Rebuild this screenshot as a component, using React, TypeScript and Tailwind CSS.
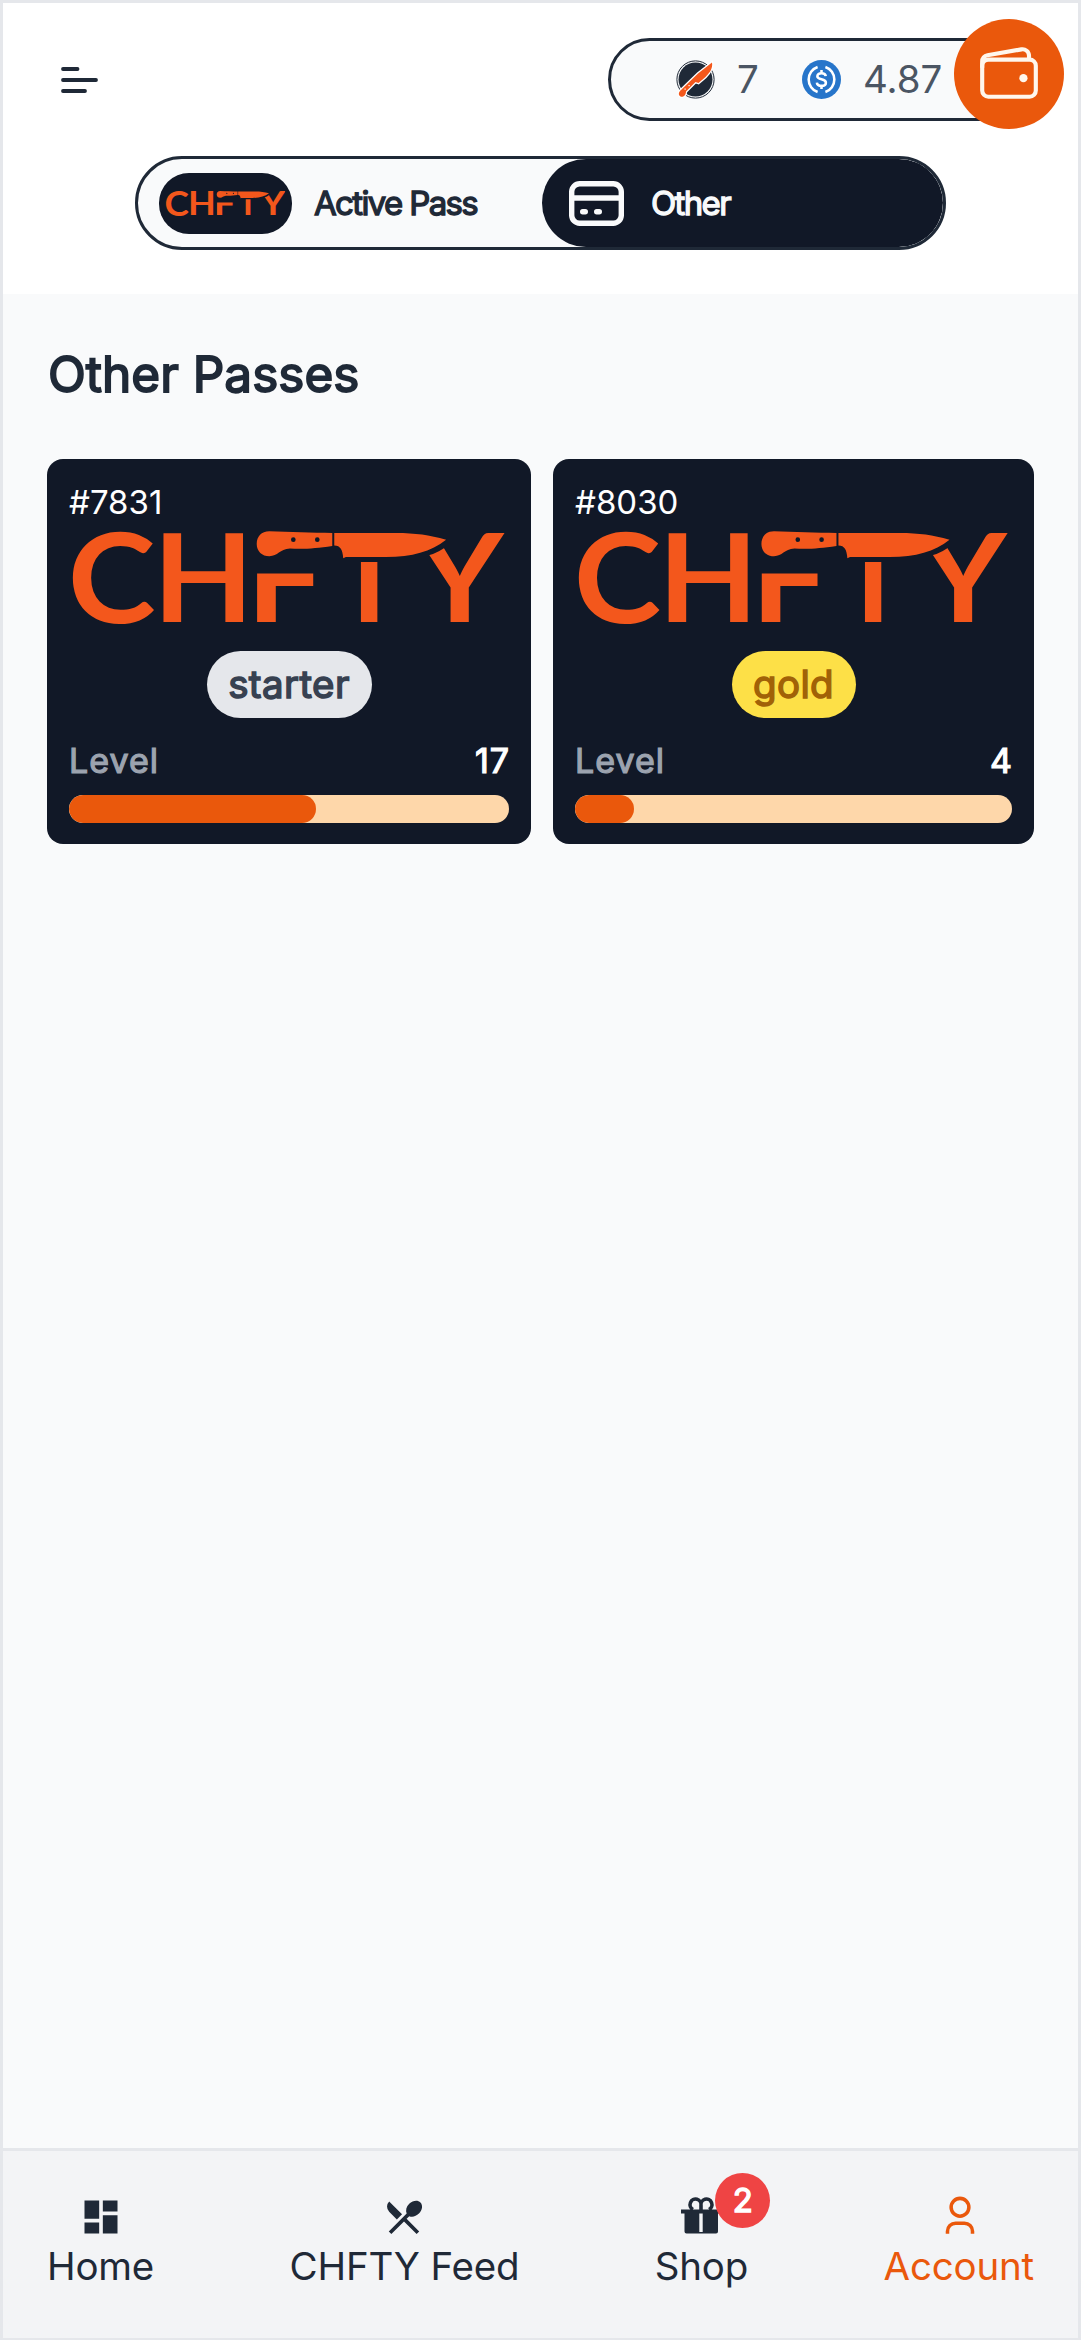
import React from "react";
import { MdDashboard, MdRestaurantMenu } from "react-icons/md";
import { IoWalletOutline } from "react-icons/io5";

const INTER = "font-['Inter',sans-serif]";

function ChftyLogo({ id, className }: { id: string; className?: string }) {
  return (
    <svg viewBox="0 0 1295 280" preserveAspectRatio="none" className={`overflow-visible ${className ?? ""}`} fill="#f3571c" aria-label="CHFTY">
      <defs>
        <clipPath id={`${id}-f`}>
          <rect x="550" y="128" width="260" height="150" />
        </clipPath>
        <clipPath id={`${id}-t`}>
          <rect x="700" y="93" width="400" height="190" />
        </clipPath>
        <clipPath id={`${id}-y`}>
          <path d="M1066 74 Q1100 66 1130 40 L1160 0 H1300 V280 H1066Z" />
        </clipPath>
      </defs>
      <g fontFamily="Lato" fontWeight="700" fontSize="370">
        <text transform="translate(-16 276) scale(1 1.015)" textLength="264" lengthAdjust="spacingAndGlyphs">C</text>
        <text transform="translate(240 274)" textLength="302" lengthAdjust="spacingAndGlyphs">H</text>
        <g clipPath={`url(#${id}-f)`}>
          <text transform="translate(520 274)" textLength="235" lengthAdjust="spacingAndGlyphs">F</text>
        </g>
        <g clipPath={`url(#${id}-t)`}>
          <text transform="translate(780 274)" textLength="220" lengthAdjust="spacingAndGlyphs">T</text>
        </g>
        <g clipPath={`url(#${id}-y)`}>
          <text transform="translate(1030 274)" textLength="264" lengthAdjust="spacingAndGlyphs">Y</text>
        </g>
      </g>
      <path
        fillRule="evenodd"
        d="M590 1C566 1 552 17 552 39C552 61 568 76 590 76C616 76 620 55 652 53C700 55 730 52 779 45V6C720 6 650 3 590 1ZM662 19a7 7 0 1 1 0 14a7 7 0 1 1 0-14ZM734 19a7 7 0 1 1 0 14a7 7 0 1 1 0-14Z"
      />
      <path d="M785 6H970C1030 6 1070 12 1121 26C1075 62 1020 78 940 78H820L812 82C810 58 804 44 785 44Z" />
    </svg>
  );
}

function MenuIcon() {
  return (
    <svg viewBox="0 0 37 26" className="h-[26px] w-[37px]" stroke="#1f2937" strokeWidth="3.8" strokeLinecap="round">
      <path d="M2 2H16.500M2 13H35M2 24H24" />
    </svg>
  );
}

function KnifeCoin() {
  return (
    <svg viewBox="0 0 39 39" className="h-[39px] w-[39px] overflow-visible">
      <circle cx="19.5" cy="19.5" r="18.6" fill="none" stroke="#1f2937" strokeWidth="1" />
      <circle cx="19.5" cy="19.5" r="17" fill="#1f2937" />
      <path
        d="M36 2.500C37 8 34 12.500 29.500 17L22.500 23L19.500 22L10 31.500C10 36 6.500 37.500 4.500 36.500C2 35 2.500 32 5 30L22 13.500Z"
        fill="#f4581c"
        stroke="#ffffff"
        strokeWidth="2.600"
        paintOrder="stroke"
      />
      <path d="M8.500 28.500h1.200v1.200h-1.200ZM12.500 25h1.200v1.200h-1.200Z" fill="#fff" />
    </svg>
  );
}

function UsdcCoin() {
  return (
    <svg viewBox="0 0 32 32" className="h-[39px] w-[39px]">
      <circle cx="16" cy="16" r="16" fill="#2775ca" />
      <g fill="none" stroke="#fff" strokeWidth="2.100">
        <path d="M12.800 5.700A10.900 10.900 0 0 0 12.800 26.300M19.200 5.700A10.900 10.900 0 0 1 19.200 26.300" />
        <path d="M19.500 13.300C19.300 11.700 18 10.900 16 10.900C14 10.900 12.600 11.900 12.600 13.400C12.600 16.900 19.600 14.800 19.600 18.600C19.600 20.200 18.200 21.200 16 21.200C13.800 21.200 12.400 20.300 12.200 18.500M16 8.300V11M16 21V23.700" />
      </g>
    </svg>
  );
}

function CardIcon() {
  return (
    <svg viewBox="0 0 55 45" className="h-[45px] w-[55px]" fill="none" stroke="#f9fafb" strokeWidth="5.400">
      <rect x="2.700" y="2.700" width="49.600" height="39.600" rx="8" />
      <path d="M3 17H52" />
      <path d="M13.700 30.700H16.300M27.700 30.700H30.300" strokeLinecap="round" />
    </svg>
  );
}

function GiftIcon() {
  return (
    <svg viewBox="0 0 44 44" className="h-11 w-11 overflow-visible" fill="#1f2937">
      <path d="M2 14.500H42V18.500H39V36.500Q39 38.500 37 38.500H7.500Q5.500 38.500 5.500 36.500V18.500H2Z" />
      <path d="M20.300 18.500H23.700V37H20.300Z" fill="#f3f4f6" />
      <g fill="none" stroke="#1f2937" strokeWidth="3.600">
        <path d="M22 15V10.500A5.500 5.500 0 1 0 14 14.500M22 15V10.500A5.500 5.500 0 1 1 30 14.500" />
      </g>
    </svg>
  );
}

function AccountIcon() {
  return (
    <svg viewBox="0 0 44 44" className="ml-[2px] h-11 w-11" fill="none" stroke="#ea580c" strokeWidth="3.700">
      <circle cx="22" cy="11.800" r="9.300" />
      <path d="M8.900 39.500V37A8.500 8.500 0 0 1 17.400 28.500H26.600A8.500 8.500 0 0 1 35.100 37V39.500" />
    </svg>
  );
}

type Pass = {
  id: string;
  tier: string;
  level: number;
  progress: number;
  width: string;
  pill: string;
};

const passes: Pass[] = [
  { id: "7831", tier: "starter", level: 17, progress: 56.2, width: "w-[484px]", pill: "w-[165px] bg-gray-200 text-[#374151]" },
  { id: "8030", tier: "gold", level: 4, progress: 13.4, width: "w-[481px]", pill: "w-[124px] bg-[#fde047] text-[#a16207]" },
];

function PassCard({ pass }: { pass: Pass }) {
  return (
    <article className={`${pass.width} flex h-[385px] flex-col rounded-[16px] bg-[#111827] px-[22px] pt-[21px]`}>
      <p className="h-[44px] text-[33px] leading-[44px] text-white">#{pass.id}</p>
      <ChftyLogo id={`logo-${pass.id}`} className="ml-[4px] mt-[7px] h-[93px] w-[calc(100%-9px)]" />
      <span
        className={`${pass.pill} mt-[27px] flex h-[67px] items-center justify-center self-center rounded-full text-[38.5px] leading-none tracking-[0.01em] [-webkit-text-stroke:1.5px_currentColor]`}
      >
        {pass.tier}
      </span>
      <div className="mt-[20px] flex h-[44px] items-center justify-between text-[34px] tracking-[0.03em] [-webkit-text-stroke:1.2px_currentColor]">
        <span className="text-[#9ca3af]">Level</span>
        <span className="-mr-px text-white">{pass.level}</span>
      </div>
      <div className="mt-[13px] h-[28px] w-full overflow-hidden rounded-full bg-[#fed7aa]">
        <div className="h-full rounded-full bg-[#ea580c]" style={{ width: `${pass.progress}%` }} />
      </div>
    </article>
  );
}

function NavItem({ label, active, children }: { label: string; active?: boolean; children: React.ReactNode }) {
  return (
    <a className={`flex flex-col items-center ${active ? "text-[#ea580c]" : "text-[#1f2937]"}`}>
      <span className="relative flex h-11 w-11 items-center justify-center">{children}</span>
      <span className="text-[38.5px] leading-[55px] tracking-[-0.005em]">{label}</span>
    </a>
  );
}

export default function App() {
  return (
    <div className={`${INTER} flex h-[2340px] w-[1081px] flex-col border-[3px] border-b-2 border-gray-200 bg-[#f9fafb]`}>
      <header className="h-[291px] bg-white">
        <div className="flex h-[153px] items-start justify-between">
          <div className="pl-[58px] pt-[64px]">
            <MenuIcon />
          </div>
          <div className="mr-[14px] flex items-start pt-[16px]">
            <div className="-mr-[57px] mt-[19px] flex h-[83px] w-[403px] items-center rounded-l-full border-[3px] border-[#1f2937] bg-[#f9fafb] pl-[65px] text-[38.5px] leading-none text-[#4b5563]">
              <KnifeCoin />
              <span className="ml-[22px] w-[65px]">7</span>
              <UsdcCoin />
              <span className="ml-[22px]">4.87</span>
            </div>
            <button className="relative flex h-[110px] w-[110px] items-center justify-center rounded-full bg-[#ea580c] text-orange-50">
              <IoWalletOutline className="h-[66px] w-[66px]" />
            </button>
          </div>
        </div>
        <div className="ml-[132px] flex h-[94px] w-[811px] overflow-hidden rounded-full border-[3px] border-[#1f2937] bg-[#f9fafb] text-[33px] leading-none tracking-[-0.05em] [-webkit-text-stroke:1.3px_currentColor]">
          <div className="flex w-[404px] items-center pl-[21px] text-[#1f2937]">
            <span className="flex h-[61px] w-[133px] items-center justify-center rounded-[30px] bg-[#111827]">
              <ChftyLogo id="logo-active" className="h-[25px] w-[119px]" />
            </span>
            <span className="ml-[22px]">Active Pass</span>
          </div>
          <div className="flex flex-1 items-center rounded-full bg-[#111827] pl-[27px] text-[#f9fafb]">
            <CardIcon />
            <span className="ml-[27px]">Other</span>
          </div>
        </div>
      </header>

      <main className="flex-1 px-[44px] pt-[44px]">
        <h1 className="h-[72px] pl-px text-[49.5px] leading-[72px] text-[#1f2937] [-webkit-text-stroke:1.8px_currentColor]">Other Passes</h1>
        <div className="mt-[49px] flex gap-[22px]">
          {passes.map((p) => (
            <PassCard key={p.id} pass={p} />
          ))}
        </div>
      </main>

      <nav className="flex h-[190px] items-start justify-between border-t-[3px] border-gray-200 bg-gray-100 px-[44px] pt-[44px]">
        <NavItem label="Home">
          <MdDashboard className="h-11 w-11" />
        </NavItem>
        <NavItem label="CHFTY Feed">
          <MdRestaurantMenu className="h-11 w-11" />
        </NavItem>
        <NavItem label="Shop">
          <GiftIcon />
          <span className="absolute -top-[22px] left-[36px] flex h-[55px] w-[55px] items-center justify-center rounded-full bg-[#ef4444] text-[33px] leading-none text-white [-webkit-text-stroke:1.4px_currentColor]">
            2
          </span>
        </NavItem>
        <NavItem label="Account" active>
          <AccountIcon />
        </NavItem>
      </nav>
    </div>
  );
}
